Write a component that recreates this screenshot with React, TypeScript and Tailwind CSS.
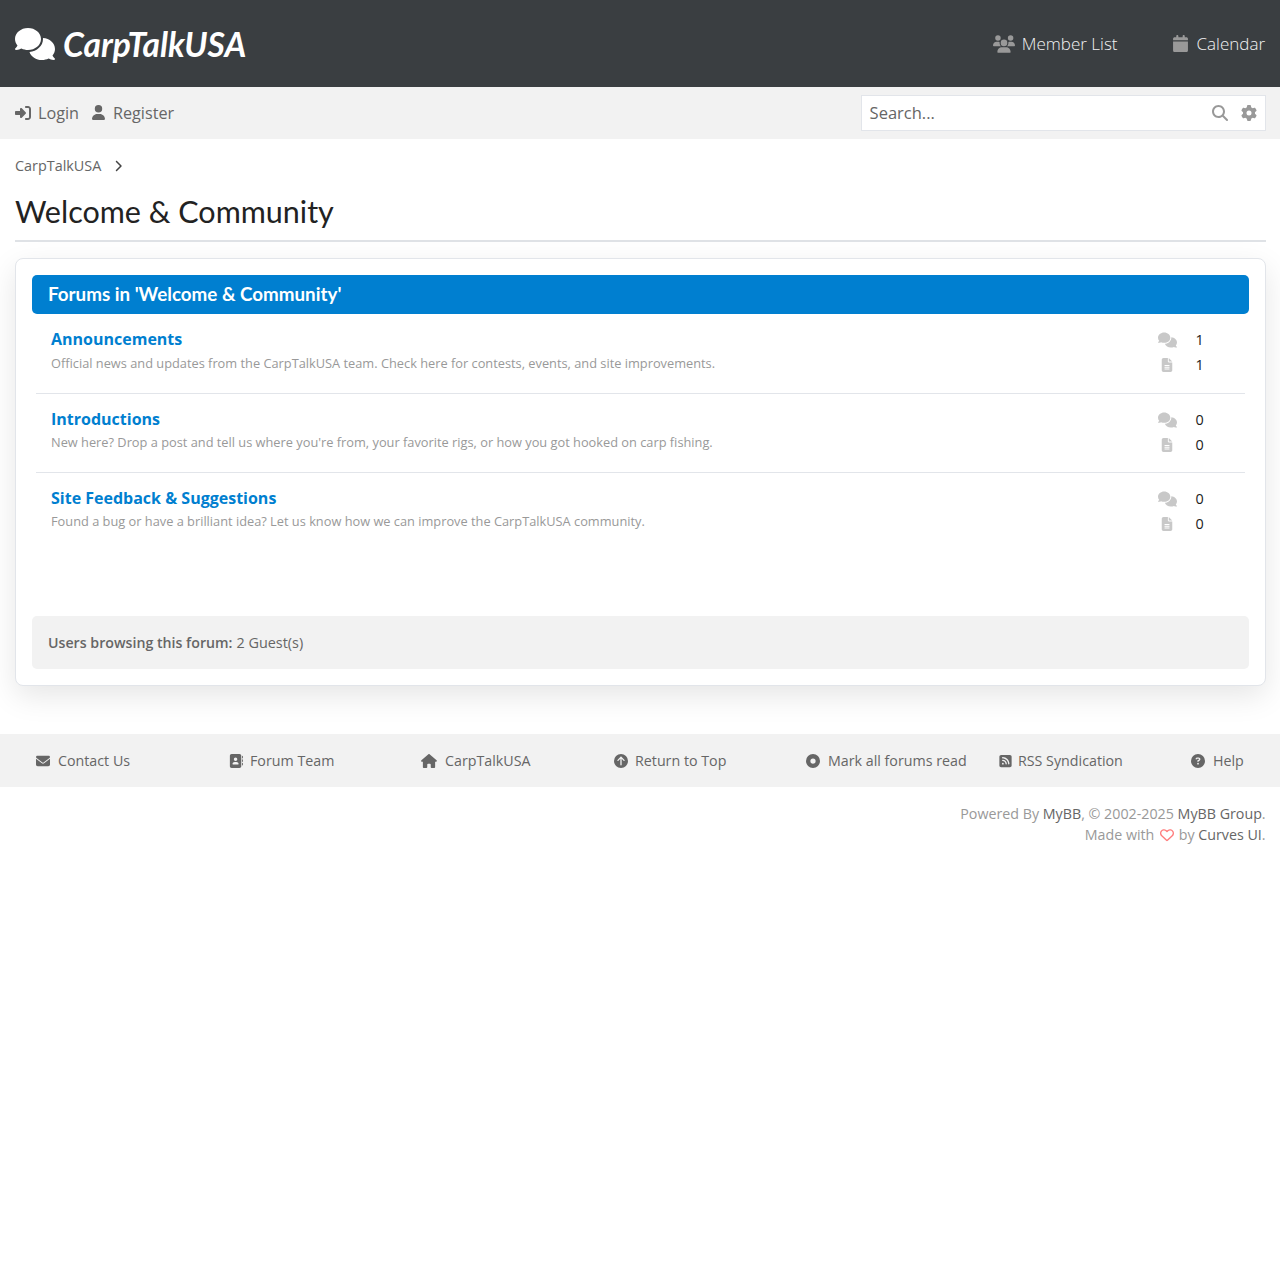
import React from 'react';
import {
  FaComments, FaUsers, FaCalendar, FaRightToBracket, FaUser, FaMagnifyingGlass, FaGear, FaChevronRight,
  FaFileLines, FaEnvelope, FaAddressBook, FaHouse, FaCircleArrowUp, FaCircleDot, FaSquareRss,
  FaCircleQuestion, FaRegHeart,
} from 'react-icons/fa6';

const forums = [
  { name: 'Announcements', desc: 'Official news and updates from the CarpTalkUSA team. Check here for contests, events, and site improvements.', threads: 1, posts: 1 },
  { name: 'Introductions', desc: "New here? Drop a post and tell us where you're from, your favorite rigs, or how you got hooked on carp fishing.", threads: 0, posts: 0 },
  { name: 'Site Feedback & Suggestions', desc: 'Found a bug or have a brilliant idea? Let us know how we can improve the CarpTalkUSA community.', threads: 0, posts: 0 },
];

const footerLinks = [
  { icon: <FaEnvelope className="w-[14px] h-[14px]" />, label: 'Contact Us', gap: 'gap-[8px]' },
  { icon: <FaAddressBook className="w-[14px] h-[14px]" />, label: 'Forum Team', gap: 'gap-[7px]' },
  { icon: <FaHouse className="w-[16px] h-[14px]" />, label: 'CarpTalkUSA', gap: 'gap-[8px]' },
  { icon: <FaCircleArrowUp className="w-[14px] h-[14px]" />, label: 'Return to Top', gap: 'gap-[7px]' },
  { icon: <FaCircleDot className="w-[14px] h-[14px]" />, label: 'Mark all forums read', gap: 'gap-[8px]' },
  { icon: <FaSquareRss className="w-[13px] h-[14px]" />, label: 'RSS Syndication', gap: 'gap-[6px]' },
  { icon: <FaCircleQuestion className="w-[14px] h-[14px]" />, label: 'Help', gap: 'gap-[8px]' },
];

const Forum = ({ f, first, last }: { f: (typeof forums)[number]; first: boolean; last: boolean }) => (
  <div className={`flex justify-between ml-[4px] mr-[4px] pl-[15px] pt-[14px] ${last ? 'pb-[14px]' : 'border-b border-[#e2e5ea]'} ${first ? 'pb-[16px]' : 'pb-[15px]'}`}>
    <div>
      <a className="block text-[16px] leading-[22px] font-bold text-[#007fd0]">{f.name}</a>
      <p className={`text-[12.8px] leading-[20px] text-[#999] ${first ? 'mt-[3px]' : 'mt-[2px]'}`}>{f.desc}</p>
    </div>
    <div className="w-[87px] shrink-0 text-[14.4px] text-[#222] font-medium leading-[24.5px]">
      <div className="flex items-center">
        <FaComments className="w-[19px] h-[16px] text-[#c8c8c8]" />
        <span className="ml-[19px]">{f.threads}</span>
      </div>
      <div className="flex items-center">
        <FaFileLines className="w-[12px] h-[14px] ml-[3px] text-[#c8c8c8]" />
        <span className="ml-[23px]">{f.posts}</span>
      </div>
    </div>
  </div>
);

export default function App() {
  return (
    <div className="min-h-[1280px] bg-white text-[#666] font-['Open_Sans',sans-serif]">
      <header className="h-[87px] bg-[#3a3e41] flex items-center justify-between pl-[15px] pr-[15px]">
        <a className="flex items-center gap-[8px] text-white">
          <FaComments className="w-[40px] h-[36px]" />
          <span className="font-['Lato',sans-serif] italic font-bold text-[33.6px] leading-[40px]">CarpTalkUSA</span>
        </a>
        <nav className="flex items-center gap-[56px] text-[17px] font-light text-[#f2f2f2]">
          <a className="flex items-center gap-[7px]"><FaUsers className="w-[22px] h-[18px] text-[#999]" />Member List</a>
          <a className="flex items-center gap-[8px]"><FaCalendar className="w-[15px] h-[17px] text-[#999]" />Calendar</a>
        </nav>
      </header>

      <div className="h-[52px] bg-[#f2f2f2] flex items-center justify-between pl-[15px] pr-[14.4px] text-[16.2px]">
        <div className="flex items-center gap-[13px]">
          <a className="flex items-center gap-[7px]"><FaRightToBracket className="w-[16px] h-[16px]" />Login</a>
          <a className="flex items-center gap-[8px]"><FaUser className="w-[13px] h-[15px]" />Register</a>
        </div>
        <div className="w-[405px] h-[36px] bg-white border border-[#e2e5ea] flex items-center pl-[8px] pr-[8px]">
          <span className="flex-1 text-[16.5px]">Search...</span>
          <FaMagnifyingGlass className="w-[16px] h-[16px] text-[#999]" />
          <FaGear className="w-[16px] h-[16px] text-[#999] ml-[13px]" />
        </div>
      </div>

      <main className="pl-[15px] pr-[14.4px]">
        <div className="flex items-center pt-[17px] text-[14.4px] leading-[20px]">
          CarpTalkUSA
          <FaChevronRight className="w-[10px] h-[12px] ml-[12px] text-[#444]" />
        </div>
        <h1 className="mt-[14px] pb-[8px] border-b-2 border-[#dfe2e6] font-['Lato',sans-serif] text-[30.5px] leading-[42px] text-[#222]">Welcome &amp; Community</h1>

        <section className="mt-[16px] rounded-[8px] border border-[#e2e5ea] bg-white shadow-[0_10px_30px_rgba(0,0,0,0.1)] p-[16px]">
          <h2 className="h-[39px] rounded-[5px] bg-[#007fd0] px-[16px] flex items-center font-['Lato',sans-serif] font-bold text-[18.8px] text-white">Forums in 'Welcome &amp; Community'</h2>
          <div className="h-[302px]">
            {forums.map((f, i) => <Forum key={f.name} f={f} first={i === 0} last={i === forums.length - 1} />)}
          </div>
          <div className="h-[53px] rounded-[5px] bg-[#f2f2f2] px-[16px] flex items-center text-[14.4px]">
            <strong className="font-semibold text-[14.2px] mr-[4px]">Users browsing this forum:</strong> 2 Guest(s)
          </div>
        </section>
      </main>

      <footer className="mt-[48px]">
        <div className="h-[53px] bg-[#f2f2f2] px-[36px] grid grid-cols-[193px_192px_193px_192px_193px_192px_auto] items-center text-[14.25px]">
          {footerLinks.map(l => (
            <a key={l.label} className={`flex items-center ${l.gap}`}>{l.icon}{l.label}</a>
          ))}
        </div>
        <div className="pt-[16px] pr-[14.4px] text-right text-[14.25px] leading-[21px] text-[#999]">
          <p>Powered By <a className="text-[#666]">MyBB</a>, © 2002-2025 <a className="text-[#666]">MyBB Group</a>.</p>
          <p>Made with <FaRegHeart className="inline w-[14px] h-[14px] mx-[1.5px] text-[#ff7b7b] align-[-2px]" /> by <a className="text-[#666]">Curves UI</a>.</p>
        </div>
      </footer>
    </div>
  );
}
